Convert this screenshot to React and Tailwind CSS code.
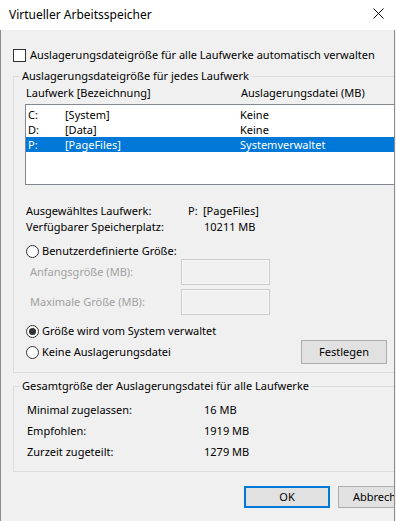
export default function App() {
  const Radio = ({ checked }) => (
    <span className="w-[13px] h-[13px] shrink-0 rounded-full border border-[#333333] bg-white flex items-center justify-center">
      {checked && <span className="w-[7px] h-[7px] rounded-full bg-[#333333]" />}
    </span>
  );
  const rows = [
    ["C:", "[System]", "Keine", false],
    ["D:", "[Data]", "Keine", false],
    ["P:", "[PageFiles]", "Systemverwaltet", true],
  ];
  return (
    <div className="w-[396px] h-[521px] bg-[#f0f0f0] overflow-hidden font-['Noto_Sans',sans-serif] text-[11px] leading-[16px] text-black">
      <div className="h-[30px] bg-white flex items-center justify-between pl-[9px] pr-[12px]">
        <span className="text-[12px]">Virtueller Arbeitsspeicher</span>
        <svg width="11" height="11" viewBox="0 0 11 11" className="mb-[3px]">
          <path d="M0.5 0.5L10.5 10.5M10.5 0.5L0.5 10.5" stroke="#000" strokeWidth="1" />
        </svg>
      </div>
      <div className="w-[395px] h-[491px] border-x border-[#8c8c8c] overflow-hidden pt-[17px]">
        <div className="flex items-center ml-[12px] h-[16px]">
          <span className="w-[13px] h-[13px] border border-[#333333] bg-white" />
          <span className="ml-[4px]">Auslagerungsdateigröße für alle Laufwerke automatisch verwalten</span>
        </div>

        <fieldset className="mt-[5px] ml-[12px] w-[400px] border border-[#dcdcdc] pl-[6px] pb-[8px]">
          <legend className="px-[2px] leading-[16px]">Auslagerungsdateigröße für jedes Laufwerk</legend>
          <div className="flex mt-[1px] pl-[6px]">
            <span className="w-[215px]">Laufwerk [Bezeichnung]</span>
            <span>Auslagerungsdatei (MB)</span>
          </div>
          <div className="mt-[3px] ml-[5px] w-[370px] h-[81px] border border-[#828790] bg-white pt-[2px]">
            {rows.map(([d, n, v, sel]) => (
              <div
                key={d}
                className={sel ? "flex h-[15px] items-center pl-[2px] bg-[#0078d7] text-white" : "flex h-[15px] items-center pl-[2px]"}
              >
                <span className="w-[37px]">{d}</span>
                <span className="w-[175px]">{n}</span>
                <span>{v}</span>
              </div>
            ))}
          </div>

          <div className="mt-[18px] pl-[6px]">
            <div className="flex">
              <span className="w-[162px]">Ausgewähltes Laufwerk:</span>
              <span className="w-[15px]">P:</span>
              <span>[PageFiles]</span>
            </div>
            <div className="flex">
              <span className="w-[178px]">Verfügbarer Speicherplatz:</span>
              <span>10211 MB</span>
            </div>
          </div>

          <div className="mt-[8px] pl-[6px] flex items-center h-[16px]">
            <Radio />
            <span className="ml-[3px]">Benutzerdefinierte Größe:</span>
          </div>

          <div className="pl-[10px] text-[#a0a0a0]">
            <div className="flex items-center">
              <span className="w-[151px]">Anfangsgröße (MB):</span>
              <span className="w-[89px] h-[26px] border border-[#cccccc] bg-[#f0f0f0] shadow-[inset_0_0_0_1px_#f7f7f7]" />
            </div>
            <div className="flex items-center mt-[4px]">
              <span className="w-[151px]">Maximale Größe (MB):</span>
              <span className="w-[89px] h-[26px] border border-[#cccccc] bg-[#f0f0f0] shadow-[inset_0_0_0_1px_#f7f7f7]" />
            </div>
          </div>

          <div className="mt-[8px] pl-[6px] flex items-center h-[16px]">
            <Radio checked />
            <span className="ml-[3px]">Größe wird vom System verwaltet</span>
          </div>

          <div className="mt-[1px] pl-[6px] flex items-center h-[24px]">
            <div className="w-[275px] flex items-center">
              <Radio />
              <span className="ml-[3px]">Keine Auslagerungsdatei</span>
            </div>
            <button className="w-[86px] h-[24px] border border-[#adadad] bg-[#e1e1e1] flex items-center justify-center">
              Festlegen
            </button>
          </div>
        </fieldset>

        <fieldset className="mt-[5px] ml-[12px] w-[400px] border border-[#dcdcdc] pl-[6px] pb-[9px]">
          <legend className="px-[2px] leading-[16px]">Gesamtgröße der Auslagerungsdatei für alle Laufwerke</legend>
          <div className="mt-[5px] pl-[7px] leading-[21px]">
            <div className="flex"><span className="w-[177px]">Minimal zugelassen:</span><span>16 MB</span></div>
            <div className="flex"><span className="w-[177px]">Empfohlen:</span><span>1919 MB</span></div>
            <div className="flex"><span className="w-[177px]">Zurzeit zugeteilt:</span><span>1279 MB</span></div>
          </div>
        </fieldset>

        <div className="mt-[14px] ml-[243px] flex">
          <button className="w-[86px] h-[22px] shrink-0 border-2 border-[#0078d7] bg-[#e1e1e1] flex items-center justify-center">
            OK
          </button>
          <button className="ml-[8px] w-[86px] h-[22px] shrink-0 border border-[#adadad] bg-[#e1e1e1] flex items-center justify-center">
            Abbrechen
          </button>
        </div>
      </div>
    </div>
  );
}
